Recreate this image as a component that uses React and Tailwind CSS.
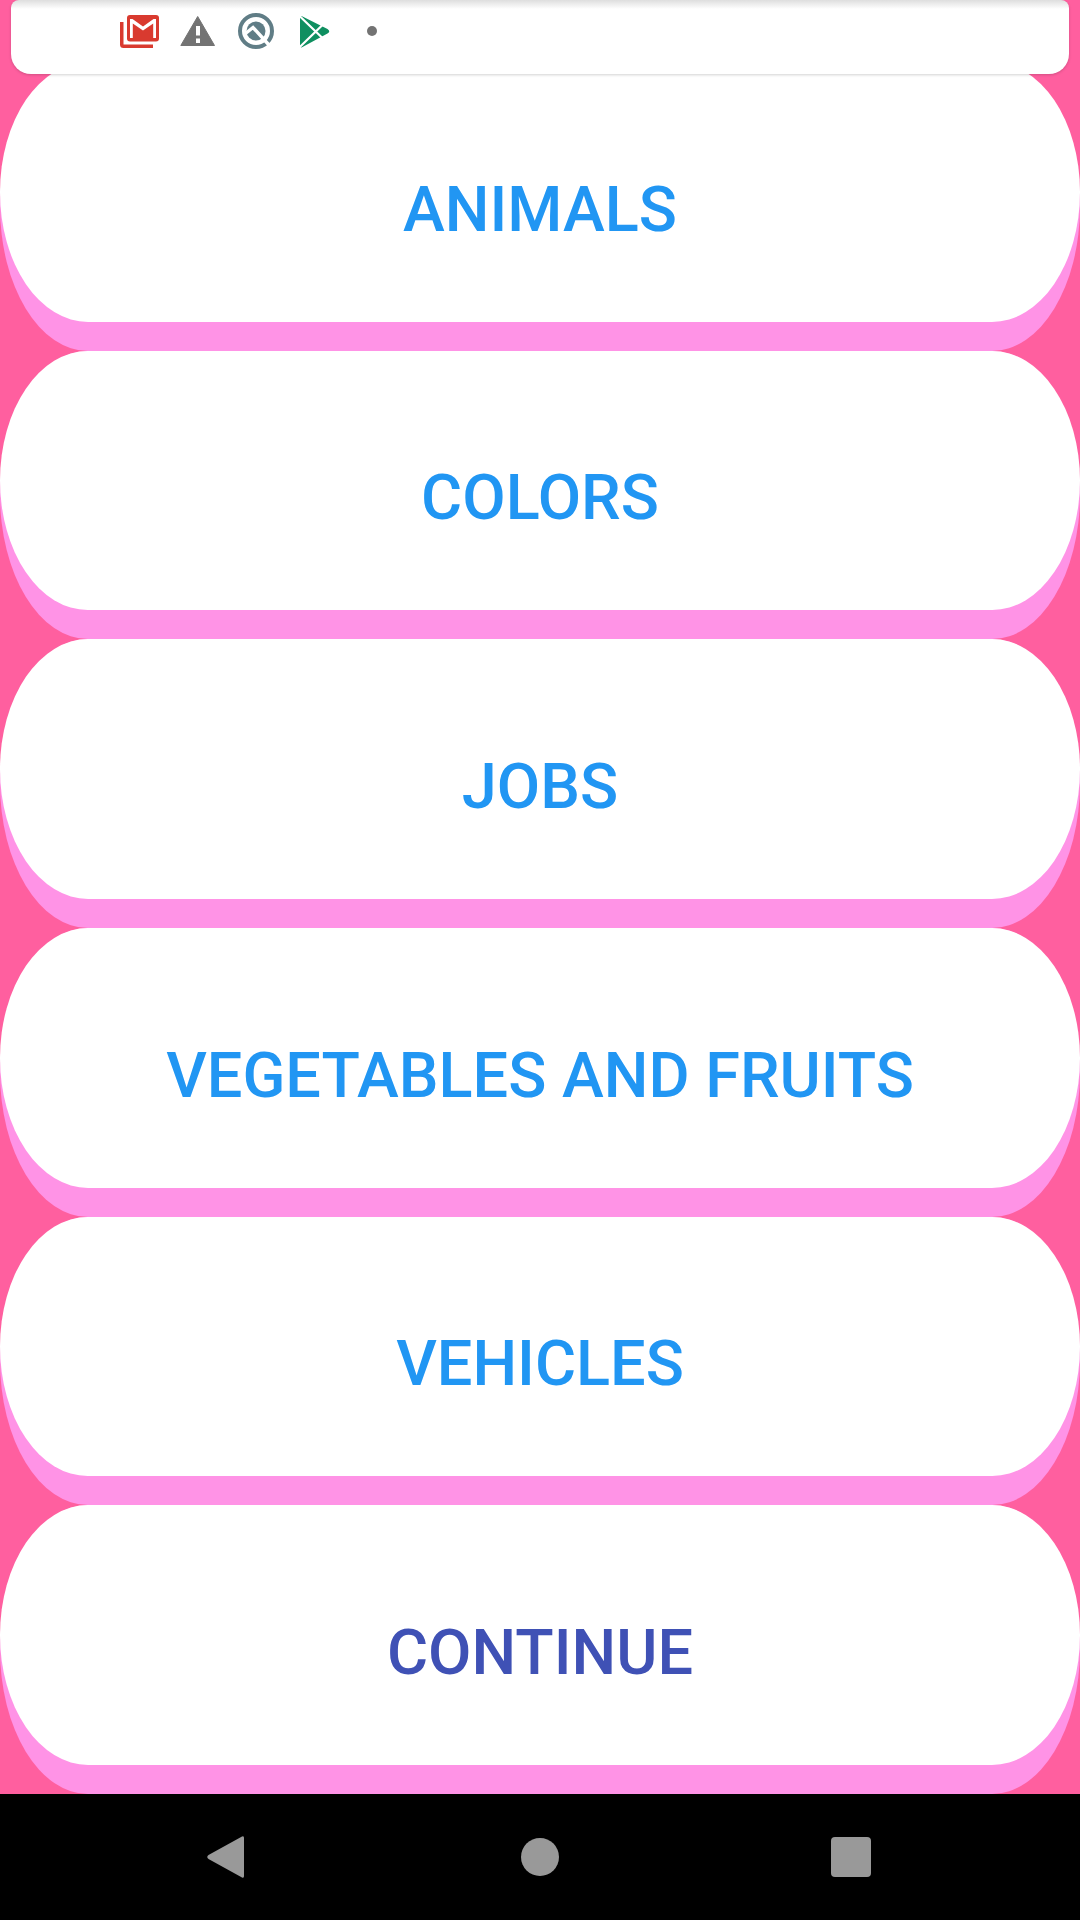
import React from "react";

const categories = [
  { label: "ANIMALS", color: "text-[#2196f3]" },
  { label: "COLORS", color: "text-[#2196f3]" },
  { label: "JOBS", color: "text-[#2196f3]" },
  { label: "VEGETABLES AND FRUITS", color: "text-[#2196f3]" },
  { label: "VEHICLES", color: "text-[#2196f3]" },
  { label: "CONTINUE", color: "text-[#3f51b5]" },
];

const GmailIcon = () => (
  <svg viewBox="0 0 40 40" className="h-10 w-10" aria-hidden="true">
    <path
      d="M0 11h3.500v22.500h29.500v3.500H3.500A3.500 3.500 0 0 1 0 33.500z"
      fill="#d93a2f"
    />
    <rect x="7" y="4" width="32" height="26.500" rx="3" fill="#d93a2f" />
    <path
      d="M10 27V8h2.500L23 15.500 33.500 8H36v19h-2.800V12.500L23 19.500l-10.200-7V27z"
      fill="#fff"
    />
  </svg>
);

const WarningIcon = () => (
  <svg viewBox="0 0 40 40" className="h-10 w-10" aria-hidden="true">
    <path
      d="M19.700 5.500 36.500 34.500H2.800z"
      fill="#737373"
      stroke="#737373"
      strokeLinejoin="round"
    />
    <path d="M18 15h4v9.500h-4zM18 27.500h4v4.500h-4z" fill="#fff" />
  </svg>
);

const QIcon = () => (
  <svg viewBox="0 0 40 40" className="h-10 w-10" aria-hidden="true">
    <circle cx="20" cy="20" r="16" fill="none" stroke="#607d86" strokeWidth="4" />
    <circle cx="20" cy="20" r="9.500" fill="#607d86" />
    <path
      d="M9.500 22.500 17 16.500 33 34"
      fill="none"
      stroke="#fff"
      strokeWidth="3.400"
    />
  </svg>
);

const PlayIcon = () => (
  <svg viewBox="0 0 40 40" className="h-10 w-10" aria-hidden="true">
    <path
      d="M6 5.500q1-1 2.500 0L33.500 18q3.500 2.300 0 4.600L8.500 36q-1.500 1-2.500-.5z"
      fill="#0f8f60"
    />
    <path
      d="M5 4.500 29.500 28M5 36.800 29.500 13"
      stroke="#fff"
      strokeWidth="2.200"
    />
  </svg>
);

const DotIcon = () => (
  <svg viewBox="0 0 40 40" className="h-10 w-10" aria-hidden="true">
    <circle cx="20" cy="20" r="5" fill="#737373" />
  </svg>
);

const StatusBar = () => {
  return (
    <header className="relative z-10 mx-[11px] flex h-[74px] gap-[18px] rounded-t-lg rounded-b-[20px] bg-white bg-linear-to-b from-[#dedede] to-white to-[9px] pt-[11px] pl-[109px] shadow-[0_1px_3px_rgba(0,0,0,0.18)]">
      <GmailIcon />
      <WarningIcon />
      <QIcon />
      <PlayIcon />
      <DotIcon />
    </header>
  );
};

const NavBar = () => {
  return (
    <nav className="flex h-[126px] items-center justify-between bg-black px-[16.6%]">
      <button
        aria-label="Back"
        className="flex h-full w-[100px] items-center justify-center"
      >
        <svg viewBox="0 0 44 44" className="h-11 w-11">
          <path
            d="M35 1.500Q37 .5 37 3v38q0 2.500-2 1.500L1.500 24Q-1 22 1.500 20z"
            fill="#999"
          />
        </svg>
      </button>
      <button
        aria-label="Home"
        className="flex h-full w-[100px] items-center justify-center"
      >
        <span className="h-[38px] w-[38px] rounded-full bg-[#999]" />
      </button>
      <button
        aria-label="Recent apps"
        className="flex h-full w-[100px] items-center justify-center"
      >
        <span className="h-10 w-10 rounded bg-[#999]" />
      </button>
    </nav>
  );
};

const App = () => {
  return (
    <div className="flex min-h-screen flex-col bg-[#ff5f9f] font-[Roboto,sans-serif]">
      <StatusBar />
      {/* first button tucks under the status bar */}
      <main className="-mt-[12px] grid flex-1 auto-rows-fr">
        {categories.map((item) => (
          <button
            key={item.label}
            className="flex min-h-[160px] cursor-pointer rounded-[88px/50%] bg-[#ff93e6] pb-[29px]"
          >
            <span
              className={`flex flex-1 items-center justify-center self-stretch rounded-[88px/50%] bg-white pt-[36px] text-[63px] font-medium ${item.color}`}
            >
              {item.label}
            </span>
          </button>
        ))}
      </main>
      <NavBar />
    </div>
  );
};

export default App;
